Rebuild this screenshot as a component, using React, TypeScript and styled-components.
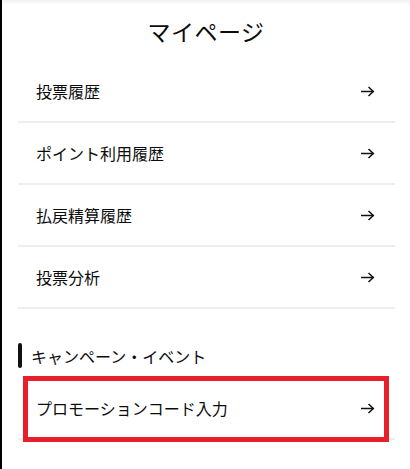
import React from "react";
import styled, { createGlobalStyle } from "styled-components";

const GlobalStyle = createGlobalStyle`
  html, body {
    margin: 0;
    padding: 0;
    background: #fff;
  }
  body {
    font-family: "Noto Sans CJK JP", "Noto Sans", sans-serif;
    color: #0c0c0c;
  }
`;

// page frame with the dark edge on the left and a faint shadow from the bar above
const Page = styled.div`
  min-height: 469px;
  border-left: 2px solid #000;
  box-shadow: inset 0 5px 4px -3px rgba(0, 0, 0, 0.07);
  box-sizing: border-box;
`;

const Header = styled.header`
  height: 61px;
  display: flex;
  align-items: center;
  justify-content: center;
`;

const Title = styled.h1`
  margin: 0;
  font-size: 23px;
  font-weight: 400;
  letter-spacing: 0.5px;
`;

const List = styled.ul`
  list-style: none;
  margin: 0;
  padding: 0 15px 0 16px;
`;

const Row = styled.li`
  position: relative;
  height: 60px;
  display: flex;
  align-items: center;
  justify-content: space-between;
  padding: 0 20px 0 18px;
  border-bottom: 2px solid #eeeeee;
  font-size: 16px;
  cursor: pointer;
`;

// red frame drawn around a highlighted row
const Mark = styled.span`
  position: absolute;
  left: 5px;
  right: 6px;
  top: -2px;
  bottom: -4px;
  border: 5px solid #e81e2a;
  pointer-events: none;
`;

const Section = styled.div`
  display: flex;
  align-items: center;
  gap: 9px;
  padding: 34px 0 10px;
  font-size: 16px;
`;

const Bar = styled.span`
  width: 4px;
  height: 25px;
  border-radius: 2px;
  background: #111;
`;

function Arrow() {
  return (
    <svg width="15" height="11" viewBox="0 0 15 11" fill="none">
      <path d="M1 5.5h12.5" stroke="#111" strokeWidth="1.5" />
      <path d="M8.5 1l4.8 4.5-4.8 4.5" stroke="#111" strokeWidth="1.5" />
    </svg>
  );
}

const history = ["投票履歴", "ポイント利用履歴", "払戻精算履歴", "投票分析"];

export default function App() {
  return (
    <>
      <GlobalStyle />
      <Page>
        <Header>
          <Title>マイページ</Title>
        </Header>
        <List>
          {history.map((item) => (
            <Row key={item}>
              <span>{item}</span>
              <Arrow />
            </Row>
          ))}
        </List>
        <List>
          <Section>
            <Bar />
            <span>キャンペーン・イベント</span>
          </Section>
          <Row>
            <span>プロモーションコード入力</span>
            <Arrow />
            <Mark />
          </Row>
        </List>
      </Page>
    </>
  );
}
